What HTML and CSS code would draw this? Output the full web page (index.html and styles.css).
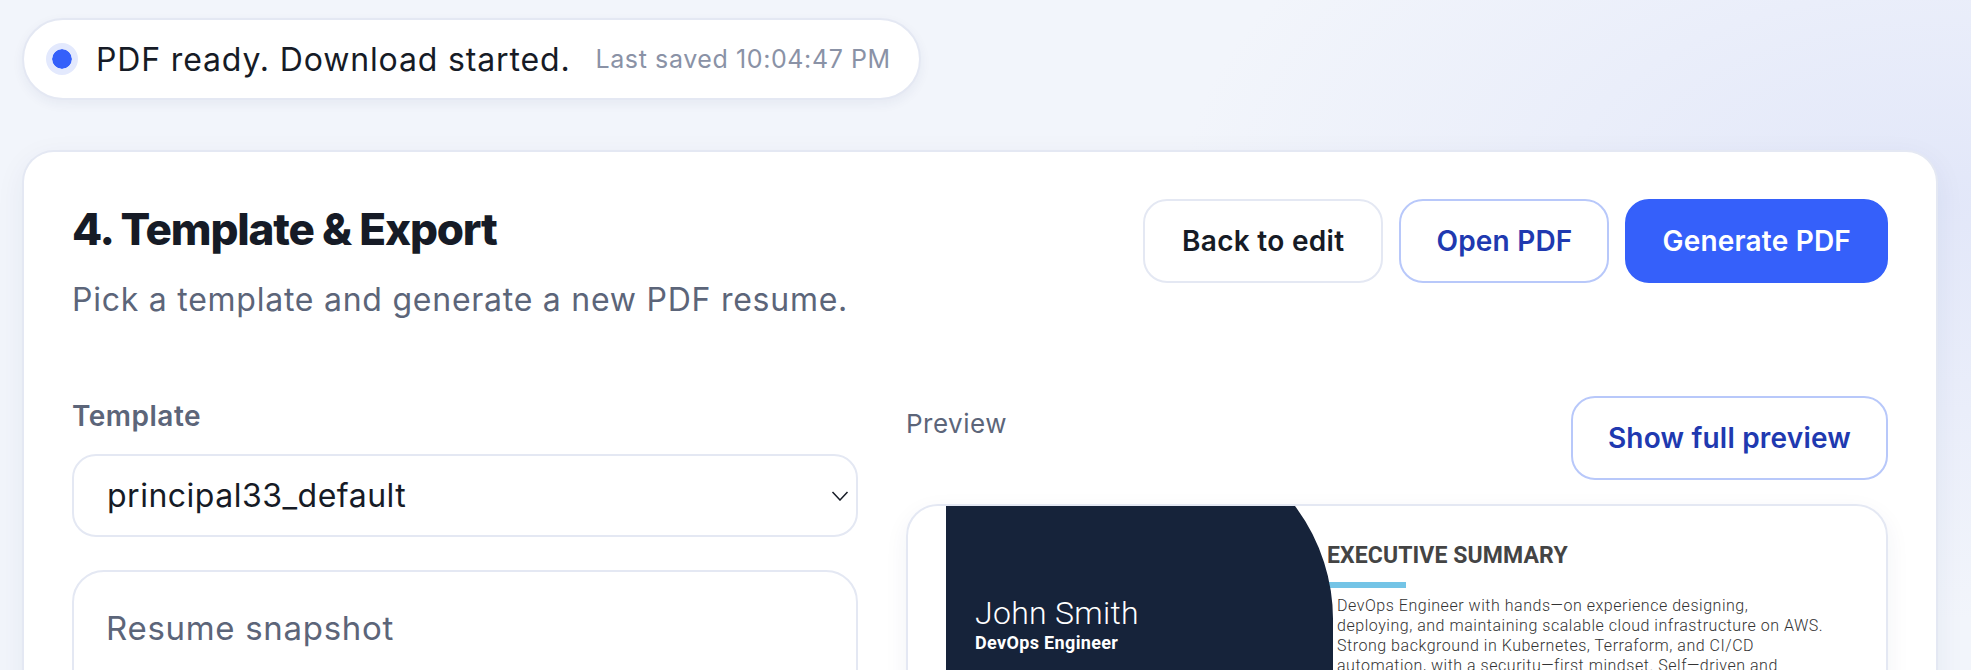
FILE: index.html
```html
<!DOCTYPE html>
<html lang="en">
<head>
  <meta charset="UTF-8" />
  <meta name="viewport" content="width=device-width, initial-scale=1.0"/>
  <title>Template &amp; Export</title>
  <link rel="stylesheet" href="styles.css">
</head>
<body>
  <div class="status-pill">
    <span class="status-dot"></span>
    <span class="status-text">PDF ready. Download started.</span>
    <span class="status-time">Last saved 10:04:47 PM</span>
  </div>

  <section class="card">
    <div class="card-head">
      <div>
        <h1>4. Template &amp; Export</h1>
        <p class="subtitle">Pick a template and generate a new PDF resume.</p>
      </div>
      <div class="actions">
        <button class="btn btn-back">Back to edit</button>
        <button class="btn btn-outline">Open PDF</button>
        <button class="btn btn-primary">Generate PDF</button>
      </div>
    </div>

    <div class="columns">
      <div class="left-col">
        <label class="field-label">Template</label>
        <div class="select-box">
          <span>principal33_default</span>
          <svg class="chevron" width="18" height="10" viewBox="0 0 18 10"><path d="M1.5 1l7.5 8 7.5-8" fill="none" stroke="#161b26" stroke-width="1.5"/></svg>
        </div>
        <div class="snapshot">
          <h3>Resume snapshot</h3>
        </div>
      </div>

      <div class="right-col">
        <div class="preview-head">
          <span class="preview-label">Preview</span>
          <button class="btn btn-outline">Show full preview</button>
        </div>
        <div class="preview-frame">
          <div class="resume">
            <div class="resume-side">
              <div class="resume-name">John Smith</div>
              <div class="resume-role">DevOps Engineer</div>
            </div>
            <div class="resume-main">
              <h4>EXECUTIVE SUMMARY</h4>
              <div class="resume-rule"></div>
              <p>DevOps Engineer with hands—on experience designing,<br>deploying, and maintaining scalable cloud infrastructure on AWS.<br>Strong background in Kubernetes, Terraform, and CI/CD<br>automation, with a securitu—first mindset. Self—driven and</p>
            </div>
          </div>
        </div>
      </div>
    </div>
  </section>
</body>
</html>
```

FILE: styles.css
```css
html, body {
  height: 670px;
  overflow: hidden;
}

body {
  margin: 0;
  padding: 18px 33px 0 22px;
  box-sizing: border-box;
  font-family: Inter, sans-serif;
  color: #161b26;
  background:
    radial-gradient(760px 420px at 1940px 200px, #e2e7f9 0%, rgba(226,231,249,0) 100%),
    #f2f5fb;
}

.status-pill {
  display: inline-flex;
  align-items: center;
  height: 82px;
  box-sizing: border-box;
  padding: 0 28px 0 22px;
  background: #fff;
  border: 2px solid #e4e8f3;
  border-radius: 41px;
  box-shadow: 0 4px 12px rgba(30, 50, 110, 0.06);
}

.status-dot {
  width: 20px;
  height: 20px;
  border-radius: 50%;
  background: #3560fa;
  border: 6px solid #e3e9fd;
  background-clip: padding-box;
  margin-right: 18px;
}

.status-text {
  font-size: 32px;
  letter-spacing: 0.85px;
  margin-right: 25px;
}

.status-time {
  font-size: 25px;
  letter-spacing: 0.6px;
  color: #8a92a6;
}

.card {
  margin-top: 50px;
  height: 560px;
  box-sizing: border-box;
  padding: 47px 48px 0;
  background: #fff;
  border: 2px solid #e4e8f3;
  border-bottom: none;
  border-radius: 32px 32px 0 0;
  box-shadow: 0 8px 30px rgba(30, 50, 110, 0.06);
}

.card-head {
  display: flex;
  justify-content: space-between;
  align-items: flex-start;
}

h1 {
  margin: 0;
  font-size: 44px;
  font-weight: 800;
  letter-spacing: -1.2px;
  line-height: 60px;
}

.subtitle {
  margin: 22px 0 0;
  font-size: 32px;
  letter-spacing: 0.75px;
  line-height: 38px;
  color: #5c6579;
}

.actions {
  display: flex;
  gap: 16px;
}

.btn {
  height: 84px;
  padding: 0 35px;
  font-family: inherit;
  font-size: 28px;
  font-weight: 600;
  letter-spacing: 0.2px;
  color: #161b26;
  background: #fff;
  border: 2px solid #e4e8f3;
  border-radius: 24px;
}

.btn-back {
  padding: 0 37px;
  letter-spacing: 0.3px;
}

.btn-outline {
  color: #2039b0;
  border-color: #b8c8fa;
}

.btn-primary {
  color: #fff;
  background: #3560fa;
  border-color: #3560fa;
}

.columns {
  display: grid;
  grid-template-columns: 786px 1fr;
  gap: 48px;
  margin-top: 77px;
}

.left-col {
  padding-top: 4px;
}

.field-label {
  display: block;
  font-size: 28px;
  font-weight: 600;
  letter-spacing: 0.5px;
  color: #5c6579;
  line-height: 32px;
  margin-bottom: 22px;
}

.select-box {
  display: flex;
  align-items: center;
  justify-content: space-between;
  height: 83px;
  box-sizing: border-box;
  padding: 0 7px 0 33px;
  font-size: 32px;
  letter-spacing: 0.5px;
  border: 2px solid #e4e8f3;
  border-radius: 24px;
}

.snapshot {
  margin-top: 33px;
  height: 200px;
  box-sizing: border-box;
  padding: 36px 32px;
  border: 2px solid #e4e8f3;
  border-radius: 32px;
}

.snapshot h3 {
  margin: 0;
  font-size: 33px;
  font-weight: 400;
  letter-spacing: 0.7px;
  color: #5c6579;
}

.preview-head {
  display: flex;
  justify-content: space-between;
  align-items: flex-start;
  height: 84px;
}

.preview-label {
  font-size: 26px;
  letter-spacing: 0.5px;
  color: #5c6579;
  margin-top: 12px;
}

.preview-frame {
  margin-top: 24px;
  height: 300px;
  box-sizing: border-box;
  padding: 0 38px;
  border: 2px solid #e4e8f3;
  border-radius: 32px;
  overflow: hidden;
  box-shadow: 0 8px 24px rgba(30, 50, 110, 0.06);
}

.resume {
  display: flex;
  height: 100%;
}

.resume-side {
  width: 387px;
  flex: none;
  box-sizing: border-box;
  padding: 88px 0 0 29px;
  color: #fff;
  background: #16233a;
  clip-path: path("M0 0H349A190 190 0 0 1 387 119V300H0Z");
}

.resume-name {
  font-family: Roboto, sans-serif;
  font-size: 32px;
  font-weight: 300;
  letter-spacing: 0.3px;
}

.resume-role {
  font-family: Roboto, sans-serif;
  font-size: 18px;
  font-weight: 700;
  letter-spacing: 0.35px;
}

.resume-main {
  flex: 1;
  margin-left: -6px;
  padding-top: 36px;
  font-family: Roboto, sans-serif;
  color: #333;
}

.resume-main h4 {
  margin: 0;
  font-size: 23px;
  letter-spacing: 0.1px;
  line-height: 27px;
  color: #444;
}

.resume-rule {
  width: 79px;
  height: 6px;
  margin-top: 13px;
  background: #74c4e6;
}

.resume-main p {
  margin: 8px 0 0 10px;
  font-size: 16px;
  font-weight: 300;
  letter-spacing: 0.53px;
  line-height: 20px;
  white-space: nowrap;
}
```
